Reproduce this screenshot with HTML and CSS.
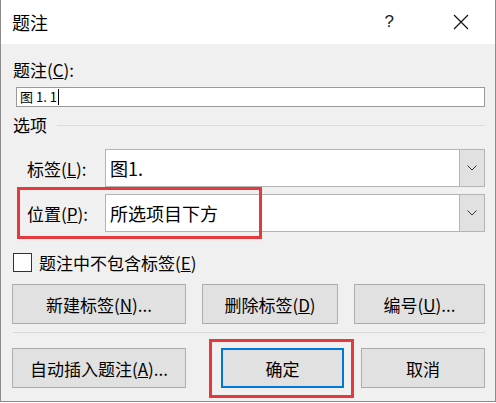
FILE: index.html
```html
<!DOCTYPE html>
<html lang="zh-CN">
  <head>
    <meta charset="utf-8">
    <title>题注</title>
    <link rel="stylesheet" href="styles.css">
  </head>

  <body>
    <div class="window">
      <div class="titlebar">
        <span class="title">题注</span>
        <span class="help">?</span>
        <svg class="close" width="16" height="16" viewBox="0 0 16 16">
          <path d="M1 1 L15 15 M15 1 L1 15" stroke="#111" stroke-width="1.2" fill="none"/>
        </svg>
      </div>
      <div class="content">
        <div class="caption-label">题注(<u>C</u>):</div>
        <div class="caption-input"><span>图 1. 1</span><span class="caret"></span></div>

        <div class="group-title"><span>选项</span><div class="group-line"></div></div>

        <div class="opt-row first">
          <div class="opt-label">标签(<u>L</u>):</div>
          <div class="combo">
            <div class="combo-text">图1.</div>
            <div class="combo-btn">
              <svg width="10" height="6" viewBox="0 0 10 6"><path d="M0.5 0.5 L5 5 L9.5 0.5" stroke="#333" fill="none"/></svg>
            </div>
          </div>
        </div>
        <div class="opt-row">
          <div class="mark mark-pos"></div>
          <div class="opt-label">位置(<u>P</u>):</div>
          <div class="combo">
            <div class="combo-text">所选项目下方</div>
            <div class="combo-btn">
              <svg width="10" height="6" viewBox="0 0 10 6"><path d="M0.5 0.5 L5 5 L9.5 0.5" stroke="#333" fill="none"/></svg>
            </div>
          </div>
        </div>

        <div class="check-row">
          <div class="checkbox"></div>
          <span>题注中不包含标签(<u>E</u>)</span>
        </div>

        <div class="btn-row">
          <button class="btn w-new">新建标签(<u>N</u>)...</button>
          <button class="btn w-del">删除标签(<u>D</u>)</button>
          <button class="btn w-num">编号(<u>U</u>)...</button>
        </div>

        <div class="separator"></div>

        <div class="btn-row bottom">
          <button class="btn w-auto">自动插入题注(<u>A</u>)...</button>
          <div class="ok-wrap">
            <button class="btn ok">确定</button>
            <div class="mark mark-ok"></div>
          </div>
          <button class="btn w-cancel">取消</button>
        </div>
      </div>
    </div>
  </body>
</html>
```

FILE: styles.css
```css
body {
  margin: 0;
  background-color: white;
  font-family: "Noto Sans CJK SC", "Noto Sans", sans-serif;
  font-size: 17px;
  color: black;
}

.window {
  width: 494px;
  height: 401px;
  border: 1px solid #8c8c8c;
  border-top: none;
  display: flex;
  flex-direction: column;
  background-color: #f0f0f0;
}

.titlebar {
  height: 44px;
  background-color: white;
  display: flex;
  align-items: center;
  padding-left: 11px;
}

.title {
  font-size: 18px;
  flex: 1;
}

.help {
  font-family: "Liberation Sans", sans-serif;
  font-size: 17px;
  margin-right: 59px;
  color: #222;
}

.close {
  margin-right: 26px;
}

.content {
  padding: 0 10px 0 12px;
  display: flex;
  flex-direction: column;
}

.caption-label {
  margin-top: 14px;
  height: 24px;
  line-height: 24px;
}

.caption-input {
  margin-top: 5px;
  margin-left: 3px;
  height: 18px;
  border: 1px solid #9a9a9a;
  background-color: white;
  font-size: 13px;
  line-height: 18px;
  padding-left: 3px;
  display: flex;
  align-items: center;
}

.caret {
  display: inline-block;
  width: 1px;
  height: 16px;
  background-color: black;
  margin-left: 1px;
}

.group-title {
  margin-top: 6px;
  height: 24px;
  line-height: 24px;
  display: flex;
  align-items: center;
}

.group-line {
  flex: 1;
  height: 1px;
  background-color: #dcdcdc;
  margin-left: 10px;
}

.opt-row {
  position: relative;
  display: flex;
  align-items: center;
  margin-top: 7px;
}

.opt-row.first {
  margin-top: 12px;
}

.opt-label {
  width: 78px;
  padding-left: 14px;
}

.combo {
  flex: 1;
  height: 36px;
  border: 1px solid #b4b4b4;
  background-color: white;
  display: flex;
}

.combo-text {
  flex: 1;
  padding-left: 4px;
  line-height: 36px;
  font-size: 18px;
}

.combo-btn {
  width: 24px;
  background-color: #e1e1e1;
  border-left: 1px solid #b4b4b4;
  display: flex;
  align-items: center;
  justify-content: center;
}

.mark {
  position: absolute;
  border: 3px solid #e5393d;
  pointer-events: none;
}

.mark-pos {
  left: 4px;
  top: -7px;
  width: 239px;
  height: 46px;
}

.check-row {
  margin-top: 21px;
  display: flex;
  align-items: center;
  height: 19px;
}

.checkbox {
  width: 17px;
  height: 17px;
  border: 1px solid #333;
  background-color: white;
  margin-right: 7px;
}

.btn-row {
  display: flex;
  margin-top: 12px;
  margin-left: -1px;
}

.btn-row.bottom {
  margin-top: 15px;
}

.btn {
  height: 40px;
  background-color: #e1e1e1;
  border: 1px solid #adadad;
  font-family: inherit;
  font-size: 17px;
  color: black;
  padding: 0;
}

.w-new {
  width: 174px;
}

.w-del {
  width: 136px;
  margin-left: 16px;
}

.w-num {
  width: 131px;
  margin-left: 16px;
}

.separator {
  margin-top: 8px;
  height: 1px;
  background-color: #dadada;
}

.w-auto {
  width: 174px;
}

.ok-wrap {
  position: relative;
  margin-left: 35px;
}

.ok {
  width: 123px;
  border: 2px solid #0078d7;
}

.mark-ok {
  left: -12px;
  top: -9px;
  width: 139px;
  height: 53px;
}

.w-cancel {
  width: 124px;
  margin-left: 17px;
}
```
